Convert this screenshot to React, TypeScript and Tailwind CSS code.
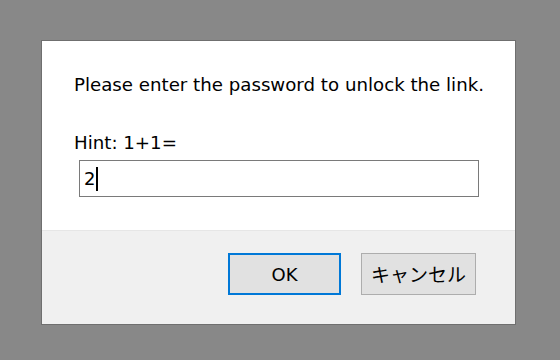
export default function App() {
  return (
    <div className="w-[560px] h-[360px] bg-[#888888] pt-[40px] pl-[41px] font-['DejaVu_Sans','Noto_Sans_CJK_JP',sans-serif]">
      <div className="w-[475px] h-[285px] border border-[#6f6f6f] bg-white flex flex-col">
        <div className="flex-1 pl-[32px] pr-[30px] pt-[33px]">
          <p className="text-[18.2px] leading-[22px] text-black whitespace-nowrap">Please enter the password to unlock the link.</p>
          <p className="mt-[36px] text-[18.2px] leading-[22px] text-black">Hint: 1+1=</p>
          <div className="mt-[6px] ml-[5px] w-[400px] h-[37px] border border-[#7a7a7a] bg-white flex items-center pl-[4px]">
            <span className="text-[18px] text-black">2</span>
            <span className="w-[2px] h-[24px] bg-black ml-[1px]" />
          </div>
        </div>
        <div className="h-[94px] bg-[#f0f0f0] border-t border-[#e6e6e6] flex items-start pt-[22px] pl-[186px] gap-[20px]">
          <button className="w-[113px] h-[42px] bg-[#e1e1e1] border-2 border-[#0078d7] text-[18px] text-black flex items-center justify-center">
            OK
          </button>
          <button className="w-[115px] h-[42px] bg-[#e1e1e1] border border-[#adadad] text-[19px] text-black flex items-center justify-center font-['Noto_Sans_CJK_JP',sans-serif]">
            キャンセル
          </button>
        </div>
      </div>
    </div>
  );
}
